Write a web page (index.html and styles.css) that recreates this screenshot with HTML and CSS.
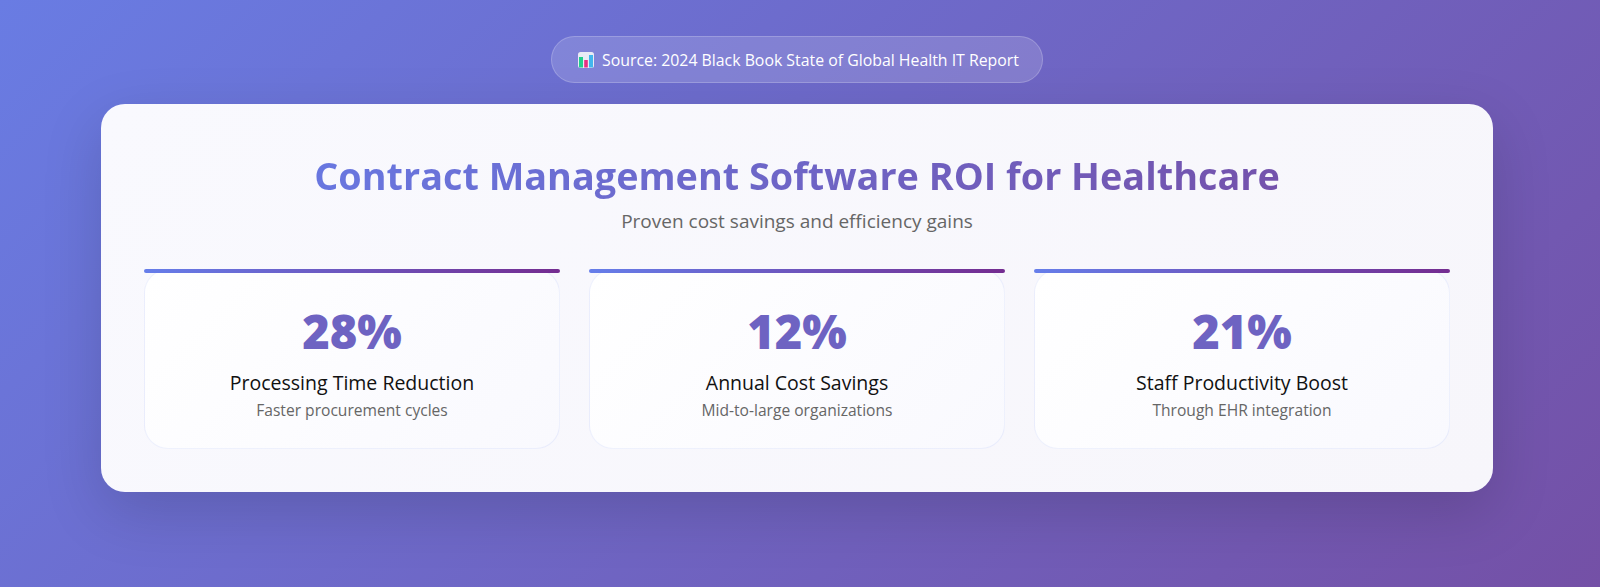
FILE: index.html
```html
<!DOCTYPE html>
<html lang="en">
<head>
<meta charset="utf-8">
<title>Contract Management Software ROI for Healthcare</title>
<link rel="stylesheet" href="styles.css">
</head>
<body>
<div class="source-wrap">
  <div class="source">
    <svg class="chart-icon" viewBox="0 0 16 16" aria-hidden="true">
      <rect x="0" y="0" width="16" height="16" rx="2.5" fill="#e9ebf5"/>
      <rect x="1" y="5" width="4" height="10.5" fill="#22cf8e"/>
      <rect x="6.2" y="8" width="3.6" height="7.5" fill="#e62f82"/>
      <rect x="11" y="3" width="4" height="12.5" fill="#43b6ee"/>
    </svg>
    <span>Source: 2024 Black Book State of Global Health IT Report</span>
  </div>
</div>
<main class="panel">
  <h1 class="title">Contract Management Software ROI for Healthcare</h1>
  <p class="subtitle">Proven cost savings and efficiency gains</p>
  <section class="stats">
    <article class="stat">
      <div class="num">28%</div>
      <div class="label">Processing Time Reduction</div>
      <div class="desc">Faster procurement cycles</div>
    </article>
    <article class="stat">
      <div class="num">12%</div>
      <div class="label">Annual Cost Savings</div>
      <div class="desc">Mid-to-large organizations</div>
    </article>
    <article class="stat">
      <div class="num">21%</div>
      <div class="label">Staff Productivity Boost</div>
      <div class="desc">Through EHR integration</div>
    </article>
  </section>
</main>
</body>
</html>
```
FILE: styles.css
```css
* { box-sizing: border-box; }
html, body { margin: 0; height: 100%; }
body {
  height: 587px;
  overflow: hidden;
  padding: 36px 107px 0 101px;
  background: linear-gradient(135deg, #697ce3 0%, #7450a6 100%);
  font-family: "Open Sans", "Noto Sans", sans-serif;
}
.source-wrap { display: flex; justify-content: center; margin-bottom: 21px; }
.source {
  display: flex;
  align-items: center;
  gap: 8px;
  height: 47px;
  padding: 0 23px 0 26px;
  border-radius: 24px;
  border: 1px solid rgba(255,255,255,.2);
  background: rgba(255,255,255,.15);
  color: #fff;
  font-size: 15.85px;
}
.chart-icon { width: 16px; height: 16px; flex: none; }
.panel {
  height: 388px;
  padding: 49px 43px 0 43px;
  border-radius: 24px;
  background: linear-gradient(135deg, #f9f9fe, #f7f6fb);
  box-shadow: 0 20px 60px rgba(0,0,0,.15);
}
.title {
  margin: 0;
  text-align: center;
  font-size: 37.8px;
  line-height: 46px;
  font-weight: 700;
  background: linear-gradient(135deg, #667eea, #764ba2);
  -webkit-background-clip: text;
  background-clip: text;
  color: transparent;
}
.subtitle {
  margin: 9px 0 0;
  text-align: center;
  color: #666;
  font-size: 19px;
  line-height: 26px;
}
.stats {
  display: grid;
  grid-template-columns: repeat(3, 1fr);
  gap: 29px;
  margin-top: 35px;
}
.stat {
  position: relative;
  height: 180px;
  padding-top: 30px;
  text-align: center;
  background: linear-gradient(135deg, #fff, #f9f9fe);
  border: 1px solid rgba(102,126,234,.1);
  border-radius: 24px;
}
.stat::before {
  content: "";
  position: absolute;
  top: -1px; left: -1px; right: -1px;
  height: 4px;
  border-radius: 3px;
  background: linear-gradient(90deg, #667eea, #742c90);
}
.num {
  font-size: 47px;
  line-height: 62px;
  font-weight: 800;
  color: #6e63c2;
}
.label { margin-top: 8px; font-size: 19.5px; line-height: 26px; font-weight: 400; color: #111; }
.desc { margin-top: 3px; font-size: 15.6px; line-height: 22px; color: #666; }
```
